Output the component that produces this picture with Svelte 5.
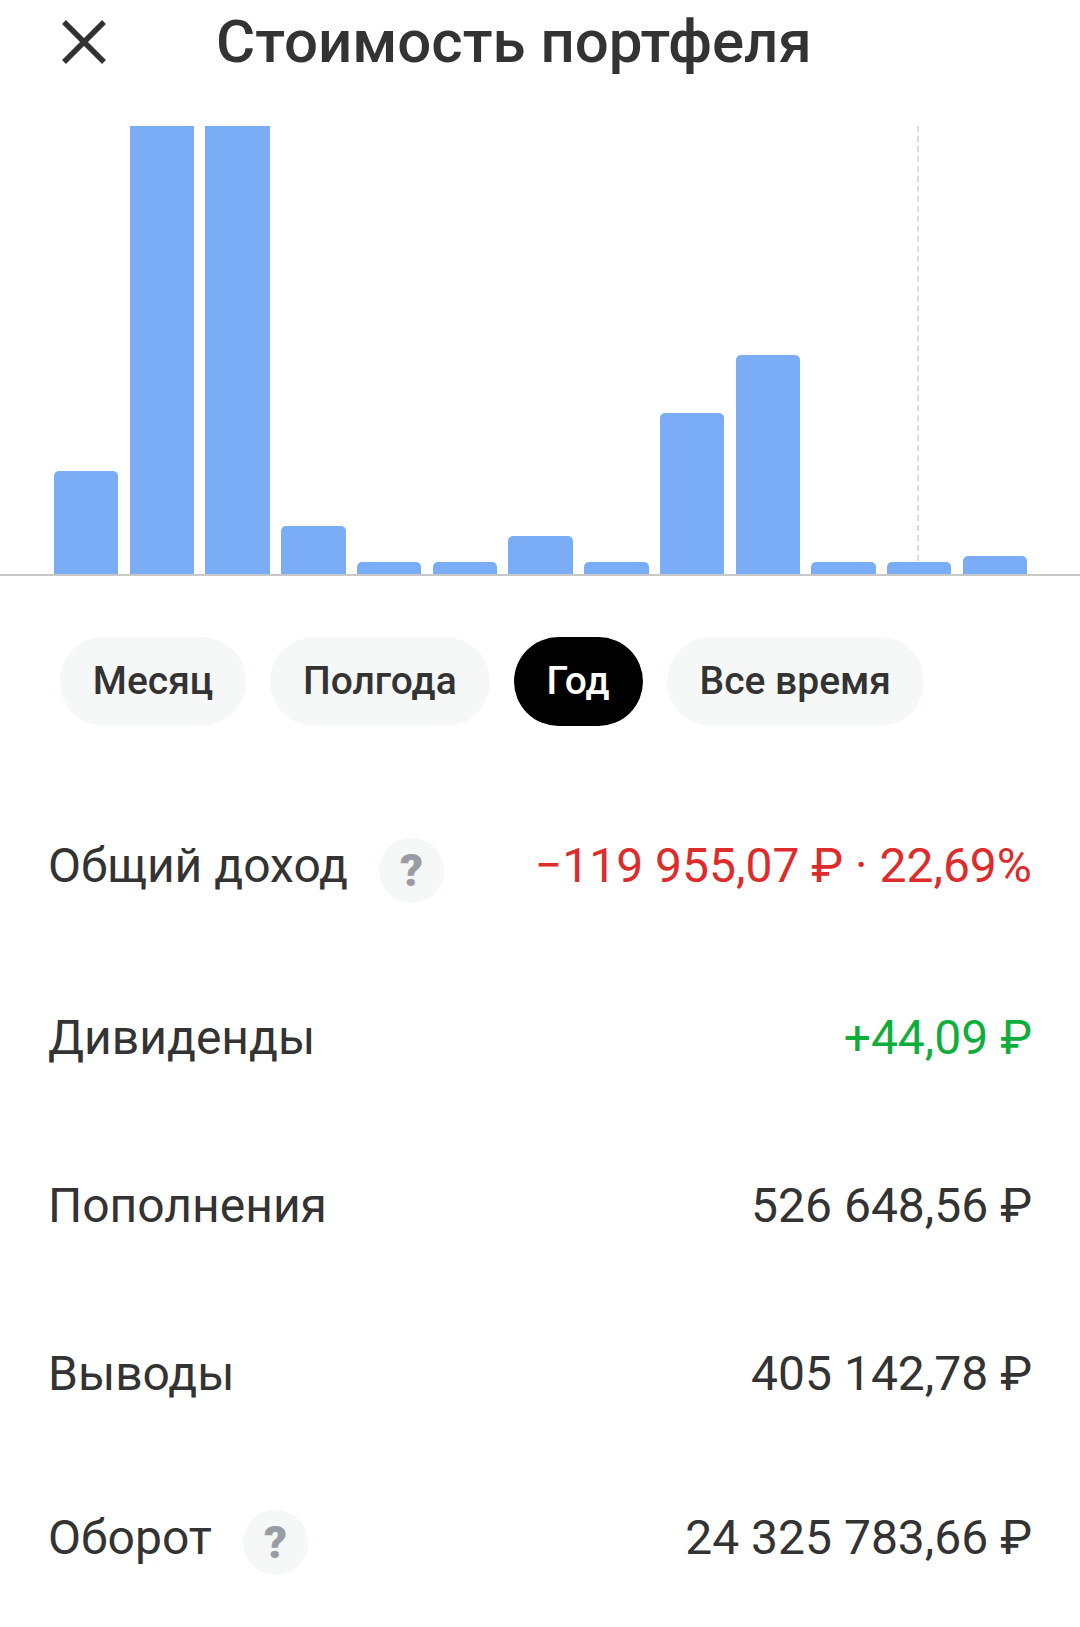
<script>
	const bars = [103, 448, 448, 48, 12, 12, 38, 12, 161, 219, 12, 12, 18];
	const periods = ['Месяц', 'Полгода', 'Год', 'Все время'];
	const rows = [
		{ label: 'Общий доход', value: '−119 955,07 ₽ · 22,69%', tone: 'loss', help: true },
		{ label: 'Дивиденды', value: '+44,09 ₽', tone: 'gain' },
		{ label: 'Пополнения', value: '526 648,56 ₽' },
		{ label: 'Выводы', value: '405 142,78 ₽' },
		{ label: 'Оборот', value: '24 325 783,66 ₽', help: true }
	];
</script>

<div class="page">
	<header>
		<svg class="close" viewBox="0 0 44 44" width="44" height="44">
			<path d="M2 2 L42 42 M42 2 L2 42" fill="none" stroke="#333" stroke-width="5.5" />
		</svg>
		<h1>Стоимость портфеля</h1>
	</header>

	<div class="chart">
		<div class="marker"></div>
		{#each bars as h}
			<div class="bar" style="height: {h}px"></div>
		{/each}
	</div>

	<div class="periods">
		{#each periods as p}
			<button class:active={p === 'Год'}>{p}</button>
		{/each}
	</div>

	<div class="rows">
		{#each rows as row}
			<div class="row" class:with-help={row.help}>
				<span class="label">{row.label}</span>
				{#if row.help}
					<span class="help">?</span>
				{/if}
				<span class="value {row.tone ?? ''}">{row.value}</span>
			</div>
		{/each}
	</div>
</div>

<style>
	:global(body) {
		background: #fff;
	}

	.page {
		width: 1080px;
		height: 1627px;
		overflow: hidden;
		font-family: Roboto, sans-serif;
		color: #333;
	}

	header {
		display: flex;
		align-items: center;
		height: 84px;
		padding-left: 62px;
	}

	.close {
		flex: none;
		margin-right: 110px;
	}

	h1 {
		margin: 0 0 2px;
		font-size: 60px;
		font-weight: 500;
	}

	.chart {
		position: relative;
		display: flex;
		align-items: flex-end;
		gap: 11.35px;
		height: 448px;
		margin-top: 42px;
		padding-left: 54px;
		border-bottom: 2px solid #c8c8c8;
	}

	.bar {
		flex: none;
		width: 64.4px;
		background: #7badf7;
		border-radius: 5px 5px 0 0;
	}

	.bar:nth-child(3),
	.bar:nth-child(4) {
		border-radius: 0;
	}

	.marker {
		position: absolute;
		left: 917px;
		top: 0;
		bottom: 13px;
		border-left: 2px dashed #ddd;
	}

	.periods {
		display: flex;
		gap: 24.2px;
		margin-top: 61px;
		padding-left: 60px;
	}

	button {
		height: 89px;
		padding: 0 32.8px 2px;
		border: 0;
		border-radius: 45px;
		background: #f6f7f7;
		color: #333;
		font-family: inherit;
		font-size: 39px;
		font-weight: 500;
	}

	button.active {
		background: #000;
		color: #fff;
	}

	.rows {
		display: flex;
		flex-direction: column;
		margin-top: 59px;
		padding: 0 48px;
	}

	.row {
		display: flex;
		align-items: center;
		box-sizing: border-box;
		height: 168px;
		font-size: 48px;
	}

	.with-help {
		padding-bottom: 8px;
	}

	.help {
		display: flex;
		align-items: center;
		justify-content: center;
		width: 65px;
		height: 65px;
		margin: 0 0 -10px 31px;
		border-radius: 50%;
		background: #f6f7f7;
		color: #989ca5;
		font-size: 45px;
		font-weight: 900;
	}

	.value {
		margin-left: auto;
	}

	.loss {
		color: #dc2c2c;
	}

	.gain {
		color: #0fae3c;
	}
</style>
